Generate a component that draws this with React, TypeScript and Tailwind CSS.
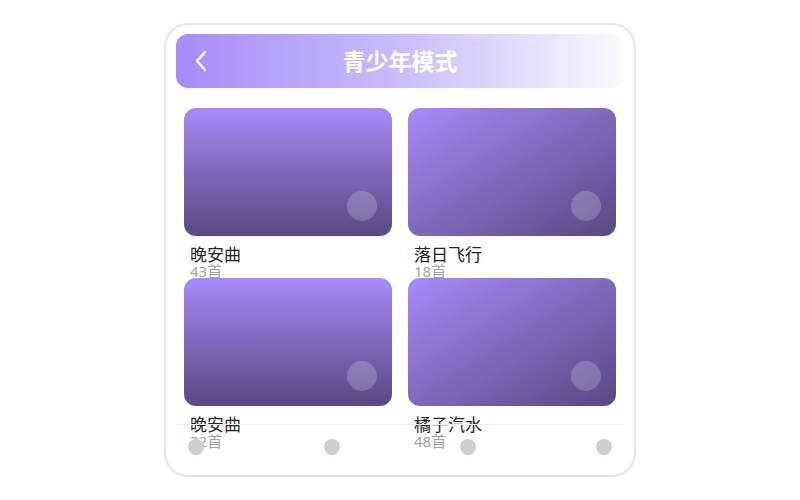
import React from "react";

const items = [
  { title: "晚安曲", count: "43首", dir: "b" },
  { title: "落日飞行", count: "18首", dir: "br" },
  { title: "晚安曲", count: "32首", dir: "b" },
  { title: "橘子汽水", count: "48首", dir: "br" },
];

export default function App() {
  return (
    <div
      className="w-[800px] h-[500px] bg-white flex items-center justify-center"
      style={{ fontFamily: '"Noto Sans", "Noto Sans CJK SC", sans-serif' }}
    >
      <div className="relative w-[472px] h-[454px] border-2 border-[#e6e7ea] rounded-[24px] overflow-hidden bg-white px-[10px] pt-[9px]">
        <div className="relative h-[54px] rounded-xl bg-linear-to-r from-[#a78bfa] via-[#cbbcfb] to-[#fbfaff] flex items-center justify-center">
          <svg
            className="absolute left-[18px] top-1/2 -translate-y-1/2"
            width="14"
            height="22"
            viewBox="0 0 14 22"
            fill="none"
          >
            <path d="M11 2 L3 11 L11 20" stroke="white" strokeWidth="2.4" strokeLinecap="round" strokeLinejoin="round" />
          </svg>
          <span className="text-white text-[23px] font-bold leading-none">青少年模式</span>
        </div>
        <div className="px-2 pt-5 grid grid-cols-2 gap-4">
          {items.map((it, i) => (
            <div key={i} className="h-[154px]">
              <div
                className={
                  "relative h-[128px] rounded-xl " +
                  (it.dir === "b"
                    ? "bg-linear-to-b from-[#a78bfa] to-[#5a4982]"
                    : "bg-linear-to-br from-[#a78bfa] to-[#5a4982]")
                }
              >
                <div className="absolute right-[15px] bottom-[15px] w-[30px] h-[30px] rounded-full bg-white/20" />
              </div>
              <div className="px-1.5 pt-[10px]">
                <div className="text-[17px] leading-[18px] text-[#222]">{it.title}</div>
                <div className="text-[15px] leading-[14px] text-[#9ca3af]">{it.count}</div>
              </div>
            </div>
          ))}
        </div>
        <div className="absolute left-[10px] right-[10px] bottom-0 h-[51px] border-t border-[#eceef1] flex justify-between px-3 pt-[14px]">
          <div className="w-4 h-4 rounded-full bg-[#cbd0d6]" />
          <div className="w-4 h-4 rounded-full bg-[#cbd0d6]" />
          <div className="w-4 h-4 rounded-full bg-[#cbd0d6]" />
          <div className="w-4 h-4 rounded-full bg-[#cbd0d6]" />
        </div>
      </div>
    </div>
  );
}
